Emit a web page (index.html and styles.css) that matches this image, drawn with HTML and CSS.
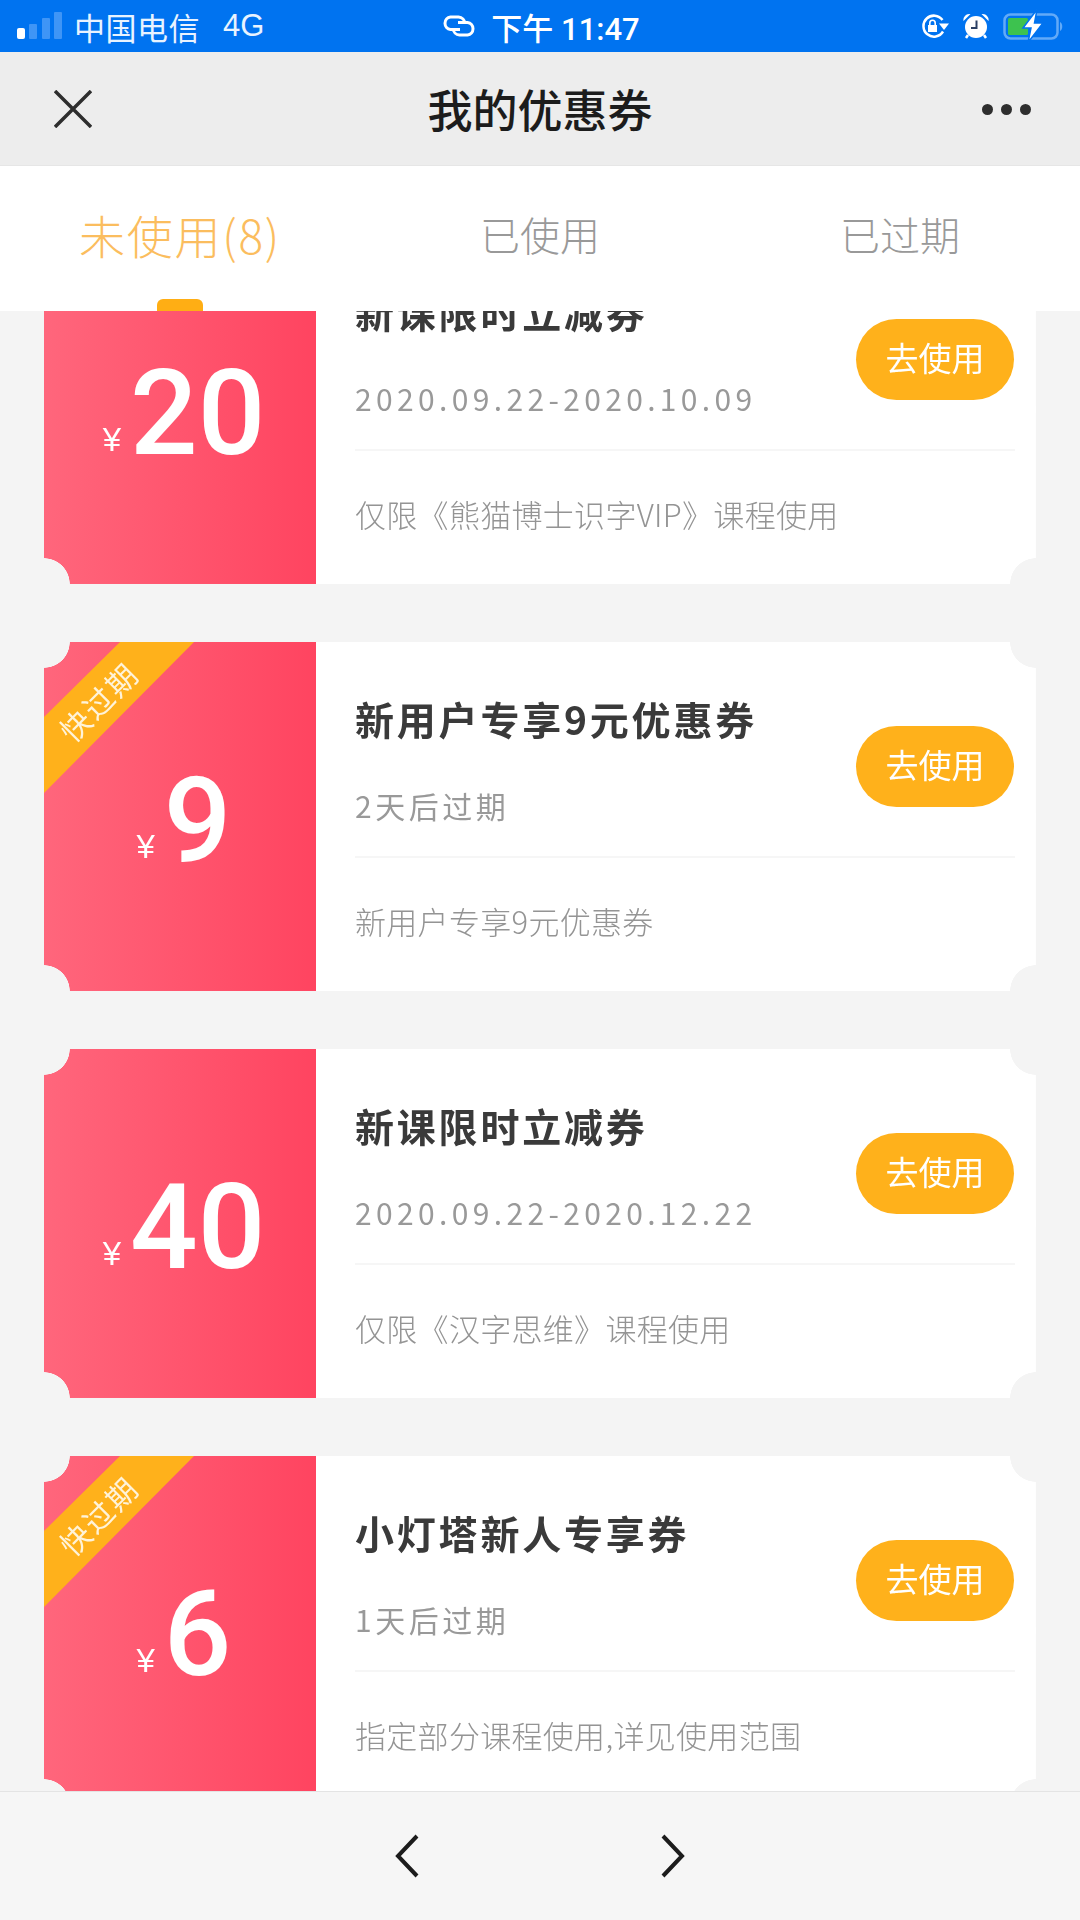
FILE: index.html
```html
<!DOCTYPE html>
<html>
<head>
    <meta charset="utf-8">
    <title>我的优惠券</title>
    <link rel="stylesheet" href="styles.css">
</head>
<body>
    <!-- Status bar -->
    <div class="status-bar">
        <div class="status-left">
            <svg class="signal" width="46" height="28" viewBox="0 0 46 28">
                <rect x="0" y="16" width="8" height="11" rx="2" fill="#fff"/>
                <rect x="12" y="12" width="8" height="15" rx="1" fill="#3f95f6"/>
                <rect x="25" y="6" width="8" height="21" rx="1" fill="#3f95f6"/>
                <rect x="37" y="0" width="8" height="27" rx="1" fill="#3f95f6"/>
            </svg>
            <span class="carrier">中国电信</span>
            <span class="network">4G</span>
        </div>
        <div class="status-center">
            <svg width="38" height="22" viewBox="0 0 38 22" fill="none" stroke="#fff" stroke-width="3">
                <path d="M20 14.500h-9.500a6.300 6.300 0 0 1 0-12.500h8a7 7 0 0 1 6.500 6.500"/>
                <path d="M18 7.500h9.500a6.300 6.300 0 0 1 0 12.500h-8a7 7 0 0 1-6.500-6.500"/>
            </svg>
            <span class="clock">下午 11:47</span>
        </div>
        <div class="status-right">
            <svg width="29" height="24" viewBox="0 0 29 24">
                <path d="M23 17.500A10.500 10.500 0 1 1 22.500 6" fill="none" stroke="#fff" stroke-width="2.500"/>
                <path d="M19 9.500h10l-5 6.500z" fill="#fff"/>
                <path d="M8 11h9v7H8z" fill="#fff"/>
                <path d="M9.800 11V9a2.700 2.700 0 0 1 5.400 0v2" fill="none" stroke="#fff" stroke-width="1.600"/>
            </svg>
            <svg width="26" height="26" viewBox="0 0 26 26">
                <circle cx="13" cy="14" r="11" fill="#fff"/>
                <path d="M0.500 8a6 6 0 0 1 7-7zM25.500 8a6 6 0 0 0-7-7z" fill="#fff"/>
                <path d="M5 22l-2 3M21 22l2 3" stroke="#fff" stroke-width="2.500"/>
                <path d="M13.500 7.500V15H8" fill="none" stroke="#2b3f63" stroke-width="2"/>
            </svg>
            <svg class="battery" width="62" height="34" viewBox="0 0 62 34">
                <rect x="1.500" y="5.500" width="53" height="24" rx="6" fill="none" stroke="#62aaf8" stroke-width="2.500"/>
                <rect x="5" y="9" width="20" height="17" rx="1.500" fill="#3dc24f"/>
                <path d="M57 13c3 1 3 8 0 9z" fill="#62aaf8"/>
                <path d="M34 0.500L20 19h8l-3 14.500L40 14h-8.500z" fill="#fff" stroke="#0073f0" stroke-width="1.500"/>
            </svg>
        </div>
    </div>

    <!-- Title bar -->
    <div class="nav-bar">
        <svg class="nav-close" width="38" height="38" viewBox="0 0 38 38" fill="none" stroke="#2e2e2e" stroke-width="3.500">
            <path d="M1 1l36 36M37 1L1 37"/>
        </svg>
        <h1 class="nav-title">我的优惠券</h1>
        <div class="nav-more"><i></i><i></i><i></i></div>
    </div>

    <!-- Tabs -->
    <div class="tabs">
        <div class="tab active"><span>未使用(8)</span></div>
        <div class="tab"><span>已使用</span></div>
        <div class="tab"><span>已过期</span></div>
    </div>

    <!-- Coupon list, scrolled down a little -->
    <div class="list">
        <div class="list-inner">
            <div class="ticket">
                <div class="ticket-value">
                    <span class="yen">¥</span><span class="amount">20</span>
                </div>
                <div class="ticket-body">
                    <div class="ticket-top">
                        <div>
                            <div class="ticket-title">新课限时立减券</div>
                            <div class="ticket-date date-range">2020.09.22-2020.10.09</div>
                        </div>
                        <button class="use-btn">去使用</button>
                    </div>
                    <div class="ticket-desc">仅限《熊猫博士识字VIP》课程使用</div>
                </div>
            </div>

            <div class="ticket">
                <div class="ticket-value">
                    <div class="ribbon"><span>快过期</span></div>
                    <span class="yen">¥</span><span class="amount">9</span>
                </div>
                <div class="ticket-body">
                    <div class="ticket-top">
                        <div>
                            <div class="ticket-title">新用户专享9元优惠券</div>
                            <div class="ticket-date">2天后过期</div>
                        </div>
                        <button class="use-btn">去使用</button>
                    </div>
                    <div class="ticket-desc">新用户专享9元优惠券</div>
                </div>
            </div>

            <div class="ticket">
                <div class="ticket-value">
                    <span class="yen">¥</span><span class="amount">40</span>
                </div>
                <div class="ticket-body">
                    <div class="ticket-top">
                        <div>
                            <div class="ticket-title">新课限时立减券</div>
                            <div class="ticket-date date-range">2020.09.22-2020.12.22</div>
                        </div>
                        <button class="use-btn">去使用</button>
                    </div>
                    <div class="ticket-desc">仅限《汉字思维》课程使用</div>
                </div>
            </div>

            <div class="ticket">
                <div class="ticket-value">
                    <div class="ribbon"><span>快过期</span></div>
                    <span class="yen">¥</span><span class="amount">6</span>
                </div>
                <div class="ticket-body">
                    <div class="ticket-top">
                        <div>
                            <div class="ticket-title">小灯塔新人专享券</div>
                            <div class="ticket-date">1天后过期</div>
                        </div>
                        <button class="use-btn">去使用</button>
                    </div>
                    <div class="ticket-desc">指定部分课程使用,详见使用范围</div>
                </div>
            </div>
        </div>
    </div>

    <!-- Back / forward toolbar -->
    <div class="toolbar">
        <svg width="24" height="44" viewBox="0 0 24 44" fill="none" stroke="#1c1c1c" stroke-width="4">
            <path d="M22 2L3 22l19 20"/>
        </svg>
        <svg width="24" height="44" viewBox="0 0 24 44" fill="none" stroke="#1c1c1c" stroke-width="4">
            <path d="M2 2l19 20L2 42"/>
        </svg>
    </div>
</body>
</html>
```

FILE: styles.css
```css
* { box-sizing: border-box; }
body {
    margin: 0;
    width: 1080px;
    height: 1920px;
    display: flex;
    flex-direction: column;
    overflow: hidden;
    font-family: "Noto Sans CJK SC", "Liberation Sans", sans-serif;
    background-color: #f4f4f4;
}

.status-bar {
    height: 52px;
    flex: none;
    display: grid;
    grid-template-columns: 1fr auto 1fr;
    align-items: center;
    background-color: #0073f0;
    color: #e8f3ff;
    font-size: 31px;
}
.status-left, .status-center, .status-right {
    display: flex;
    align-items: center;
}
.status-left { padding-left: 17px; }
.signal { margin-right: 11px; }
.carrier { letter-spacing: 0.500px; }
.network {
    margin-left: 23px;
    font-family: "Liberation Sans", sans-serif;
}
.status-center { gap: 13px; }
.clock {
    color: #fff;
    font-weight: 500;
    font-family: Roboto, "Noto Sans CJK SC", sans-serif;
}
.status-right {
    justify-content: flex-end;
    padding-right: 15px;
    gap: 14px;
}

.nav-bar {
    height: 114px;
    flex: none;
    display: grid;
    grid-template-columns: 1fr auto 1fr;
    align-items: center;
    padding: 0 54px;
    background-color: #ededed;
    border-bottom: 1px solid #e6e6e6;
}
.nav-title {
    margin: 0;
    font-size: 45px;
    font-weight: 500;
    color: #1c1c1c;
}
.nav-more {
    display: flex;
    justify-content: flex-end;
    gap: 8px;
    margin-right: -5px;
    padding-top: 2px;
}
.nav-more i {
    width: 11px;
    height: 11px;
    border-radius: 50%;
    background-color: #2e2e2e;
}

.tabs {
    height: 145px;
    flex: none;
    display: flex;
    background-color: #fff;
    position: relative;
    z-index: 1;
}
.tab {
    width: 360px;
    display: flex;
    align-items: center;
    justify-content: center;
    position: relative;
    padding-bottom: 10px;
    font-size: 40px;
    font-weight: 300;
    color: #999;
}
.tab.active {
    font-size: 46px;
    letter-spacing: 1.700px;
    color: #fbbd5e;
}
.tab.active::after {
    content: "";
    position: absolute;
    left: 157px;
    bottom: 0;
    width: 46px;
    height: 12px;
    border-radius: 6px 6px 0 0;
    background-color: #ffae14;
}

.list {
    flex: 1;
    min-height: 0;
    overflow: hidden;
}
.list-inner {
    display: flex;
    flex-direction: column;
    gap: 58px;
    padding: 0 44px;
    margin-top: -76px;
}

/* white ticket with a bite taken out of each corner */
.ticket {
    height: 349px;
    flex: none;
    display: flex;
    background-color: #fff;
    -webkit-mask:
        radial-gradient(circle 26px at 0 0, transparent 98%, #000) top left,
        radial-gradient(circle 26px at 100% 0, transparent 98%, #000) top right,
        radial-gradient(circle 26px at 0 100%, transparent 98%, #000) bottom left,
        radial-gradient(circle 26px at 100% 100%, transparent 98%, #000) bottom right;
    -webkit-mask-size: 51% 51%;
    -webkit-mask-repeat: no-repeat;
}
.ticket-value {
    width: 272px;
    flex: none;
    display: flex;
    align-items: center;
    justify-content: center;
    position: relative;
    padding-left: 8px;
    color: #fff;
    font-family: "Liberation Sans", sans-serif;
    background: linear-gradient(to right, #ff667c, #ff4460);
}
.yen {
    font-size: 33px;
    margin-top: 60px;
    margin-right: 9px;
}
.amount {
    margin-top: 7px;
    font-family: Roboto, "Liberation Sans", sans-serif;
    font-size: 119px;
    font-weight: 500;
    line-height: 1;
}
.ribbon {
    position: absolute;
    left: 0;
    top: 0;
    width: 150px;
    height: 151px;
    background-color: #ffb11b;
    clip-path: polygon(76px 0, 150px 0, 0 151px, 0 75px);
}
.ribbon span {
    position: absolute;
    left: 54px;
    top: 59px;
    transform: translate(-50%, -50%) rotate(-45deg);
    font-family: "Noto Sans CJK SC", sans-serif;
    font-size: 30px;
    letter-spacing: 2px;
    line-height: 1;
    white-space: nowrap;
    color: #fff3d9;
}

.ticket-body {
    flex: 1;
    min-width: 0;
    padding: 0 21px 0 39px;
    display: flex;
    flex-direction: column;
}
.ticket-top {
    height: 216px;
    flex: none;
    display: flex;
    justify-content: space-between;
    align-items: flex-start;
    padding-top: 51px;
    border-bottom: 2px solid #f6f6f6;
}
.ticket-title {
    font-size: 39px;
    font-weight: bold;
    line-height: 50px;
    letter-spacing: 2.800px;
    color: #3a3a3a;
    white-space: nowrap;
}
.ticket-date {
    margin-top: 42px;
    font-size: 30px;
    line-height: 40px;
    letter-spacing: 3.500px;
    color: #999;
    white-space: nowrap;
}
.date-range { letter-spacing: 4.350px; }
.use-btn {
    width: 158px;
    height: 81px;
    margin: 33px 1px 0 0;
    padding: 0 0 6px;
    border: none;
    border-radius: 41px;
    background-color: #ffb11b;
    color: #fff;
    font-family: inherit;
    font-size: 33px;
}
.ticket-desc {
    flex: 1;
    display: flex;
    align-items: center;
    padding-bottom: 8px;
    font-size: 31px;
    font-weight: 300;
    letter-spacing: 0.300px;
    color: #949494;
    white-space: nowrap;
}

.toolbar {
    height: 129px;
    flex: none;
    display: flex;
    align-items: center;
    justify-content: center;
    gap: 242px;
    background-color: #f6f6f6;
    border-top: 1px solid #e4e4e4;
    position: relative;
}
```
